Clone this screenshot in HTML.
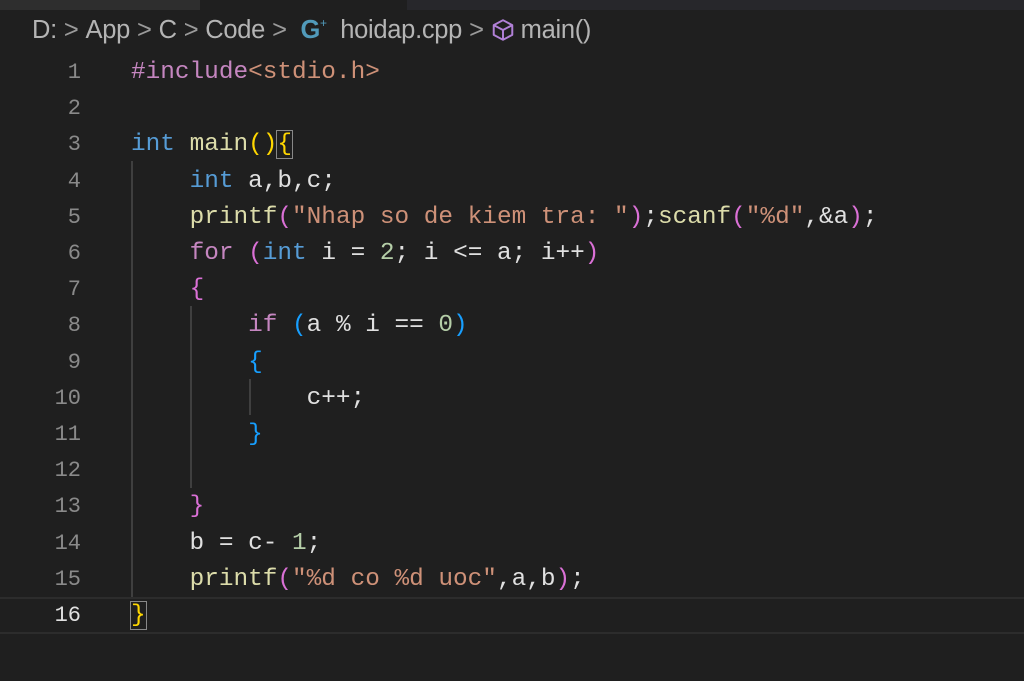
<!DOCTYPE html>
<html><head><meta charset="utf-8"><style>
html,body{margin:0;padding:0}
body{width:1024px;height:681px;background:#1f1f1f;position:relative;overflow:hidden}
.top{position:absolute;top:0;height:10px}
.bc{position:absolute;left:32px;top:16px;font:25.5px "Liberation Sans",sans-serif;color:#b4b4b4;white-space:nowrap;letter-spacing:-0.3px}
.bc .s{color:#9a9a9a;margin:0 7px}
.ln{position:absolute;left:0;width:81px;text-align:right;font:22px "Liberation Mono",monospace;color:#8a8a8a}
.code{position:absolute;left:131px;font:24.4px "Liberation Mono",monospace;color:#e0e0e0;white-space:pre}
.k{color:#569cd6}.c{color:#c586c0}.f{color:#dcdcaa}.s2{color:#ce9178}.n{color:#b5cea8}
.y{color:#ffd700}.p{color:#da70d6}.b{color:#179fff}
.g{position:absolute;width:2px;background:#3f3f3f}
</style></head><body>
<div class="top" style="left:0;width:200px;background:#2e2e2e"></div>
<div class="top" style="left:200px;width:207px;background:#1f1f1f"></div>
<div class="top" style="left:407px;width:617px;background:#27272b"></div>
<div class="bc">D:<span class="s">&gt;</span>App<span class="s">&gt;</span>C<span class="s">&gt;</span>Code<span class="s">&gt;</span> <span style="color:#519aba;font-weight:bold">G</span><span style="color:#519aba;font-size:12px;vertical-align:top">+</span>&nbsp; hoidap.cpp<span class="s">&gt;</span><svg width="24" height="24" viewBox="0 0 22 22" style="vertical-align:-4px;margin-right:6px"><path d="M11 2 L19.5 6.5 L19.5 15.5 L11 20 L2.5 15.5 L2.5 6.5 Z M2.5 6.5 L11 11 L19.5 6.5 M11 11 L11 20" fill="none" stroke="#b180d7" stroke-width="1.8" stroke-linejoin="round"/></svg>main()</div>
<div style="position:absolute;left:0;right:0;top:597px;height:33px;border-top:2px solid #2c2c2c;border-bottom:2px solid #2c2c2c"></div>
<div class="g" style="left:131px;top:161px;height:436px"></div>
<div class="g" style="left:190px;top:306px;height:182px"></div>
<div class="g" style="left:249px;top:379px;height:36px"></div>
<div id="lines"></div>
<script>
var L=[
'<span class="c">#include</span><span class="s2">&lt;stdio.h&gt;</span>',
'',
'<span class="k">int</span> <span class="f">main</span><span class="y">()</span><span class="y" style="outline:1px solid #888">{</span>',
'    <span class="k">int</span> a,b,c;',
'    <span class="f">printf</span><span class="p">(</span><span class="s2">"Nhap so de kiem tra: "</span><span class="p">)</span>;<span class="f">scanf</span><span class="p">(</span><span class="s2">"%d"</span>,&amp;a<span class="p">)</span>;',
'    <span class="c">for</span> <span class="p">(</span><span class="k">int</span> i = <span class="n">2</span>; i &lt;= a; i++<span class="p">)</span>',
'    <span class="p">{</span>',
'        <span class="c">if</span> <span class="b">(</span>a % i == <span class="n">0</span><span class="b">)</span>',
'        <span class="b">{</span>',
'            c++;',
'        <span class="b">}</span>',
'',
'    <span class="p">}</span>',
'    b = c- <span class="n">1</span>;',
'    <span class="f">printf</span><span class="p">(</span><span class="s2">"%d co %d uoc"</span>,a,b<span class="p">)</span>;',
'<span class="y" style="outline:1px solid #888">}</span>'];
var h='';
for(var i=0;i<16;i++){var t=59+i*36.2;
h+='<div class="ln" style="top:'+(t+1)+'px;'+(i==15?'color:#e0e0e0':'')+'">'+(i+1)+'</div>';
h+='<div class="code" style="top:'+t+'px">'+L[i]+'</div>';}
document.getElementById('lines').innerHTML=h;
</script>
</body></html>
